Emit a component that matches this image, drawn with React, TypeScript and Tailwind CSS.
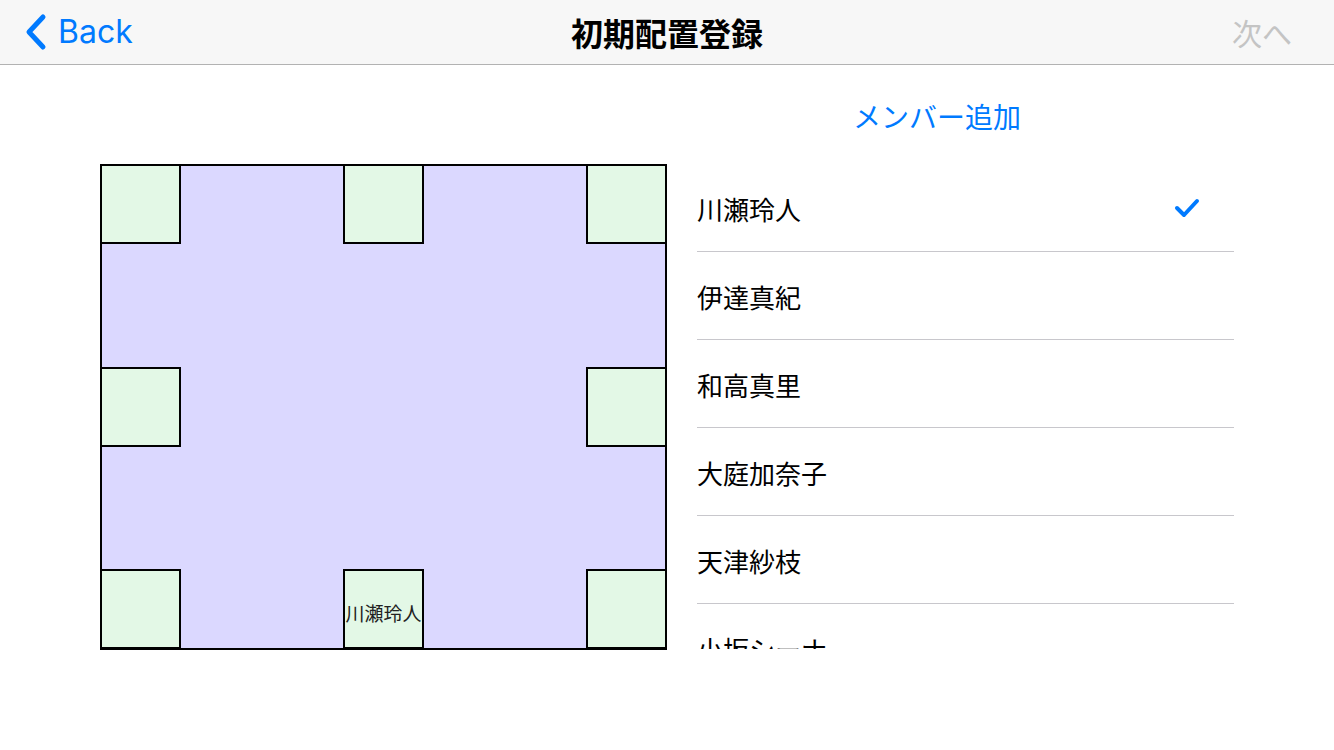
const jp = { fontFamily: '"Noto Sans CJK JP", "Noto Sans", sans-serif' };

type Seat = { x: number; y: number; name?: string };

// seat positions inside the room (px from the room's inner top-left)
const seats: Seat[] = [
  { x: 0, y: 0 },
  { x: 243, y: 0 },
  { x: 486, y: 0 },
  { x: 0, y: 203 },
  { x: 486, y: 203 },
  { x: 0, y: 405 },
  { x: 243, y: 405, name: '川瀬玲人' },
  { x: 486, y: 405 },
];

const members = ['川瀬玲人', '伊達真紀', '和高真里', '大庭加奈子', '天津紗枝', '小坂シーナ'];

function App() {
  return (
    <div className="w-[1334px] h-[750px] bg-white overflow-hidden" style={jp}>
      {/* Nav bar */}
      <header className="h-[65px] bg-[#f7f7f7] border-b border-[#b2b2b2] flex items-center justify-between px-[24px] relative">
        <div className="flex items-center gap-[10px] text-[#007aff]">
          <svg width="24" height="38" viewBox="0 0 24 38" fill="none">
            <path d="M19 4 L5 19 L19 34" stroke="#007aff" strokeWidth="5" strokeLinecap="round" strokeLinejoin="round" />
          </svg>
          <span className="text-[32px] leading-none" style={{ fontFamily: 'Inter, "Noto Sans", sans-serif' }}>Back</span>
        </div>
        <h1 className="absolute left-1/2 -translate-x-1/2 text-[32px] font-bold text-black leading-none">初期配置登録</h1>
        <span className="text-[30px] text-[#c4c4c4] leading-none mr-[18px]">次へ</span>
      </header>

      <main className="flex">
        {/* Seat map */}
        <div className="ml-[100px] mt-[99px] relative w-[567px] h-[486px] bg-[#dbd8ff] border-2 border-black">
          {seats.map((s, i) => (
            <div
              key={i}
              className="absolute w-[81px] h-[80px] bg-[#e3f8e6] border-2 border-black flex items-center justify-center"
              style={{ left: s.x - 2, top: s.y - 2 }}
            >
              {s.name && <span className="text-[19px] text-[#222] whitespace-nowrap mt-[8px]">{s.name}</span>}
            </div>
          ))}
        </div>

        {/* Member list */}
        <div className="ml-[30px] w-[537px] flex flex-col">
          <div className="mt-[31px] h-[40px] pl-[156px] flex items-center">
            <span className="text-[28px] text-[#007aff] leading-none">メンバー追加</span>
          </div>
          <div className="mt-[28px] h-[485px] overflow-hidden">
            {members.map((m, i) => (
              <div key={m} className="h-[88px] border-b border-[#c8c7cc] flex items-center justify-between pr-[34px]">
                <span className="text-[26px] text-black leading-none mt-[2px]">{m}</span>
                {i === 0 && (
                  <svg width="26" height="22" viewBox="0 0 26 22" fill="none">
                    <path d="M3 11 L10 18 L23 4" stroke="#007aff" strokeWidth="4" strokeLinecap="round" strokeLinejoin="round" />
                  </svg>
                )}
              </div>
            ))}
          </div>
        </div>
      </main>
    </div>
  );
}

export default App;
